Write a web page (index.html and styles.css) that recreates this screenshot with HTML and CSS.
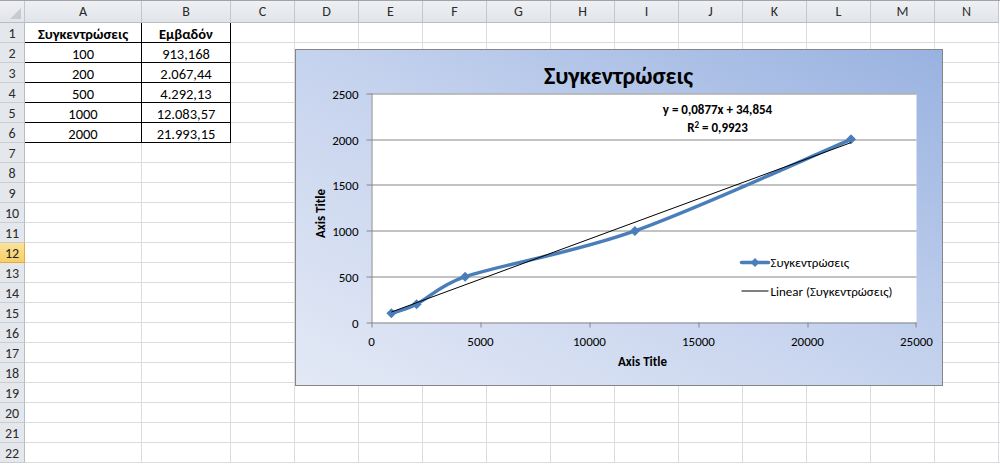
FILE: index.html
```html
<!DOCTYPE html>
<html lang="el">
<head>
<meta charset="utf-8">
<title>Συγκεντρώσεις</title>
<link rel="stylesheet" href="styles.css">
</head>
<body>
<div class="sheet">
  <div class="hdr">
    <div class="corner"></div>
    <div class="ch col-a">A</div>
    <div class="ch col-b">B</div>
    <div class="ch">C</div><div class="ch">D</div><div class="ch">E</div><div class="ch">F</div>
    <div class="ch">G</div><div class="ch">H</div><div class="ch">I</div><div class="ch">J</div>
    <div class="ch">K</div><div class="ch">L</div><div class="ch">M</div><div class="ch">N</div>
  </div>

  <div class="row"><div class="rh">1</div><div class="cell col-a tb bold">Συγκεντρώσεις</div><div class="cell col-b tb bold">Εμβαδόν</div><div class="rest"></div></div>
  <div class="row"><div class="rh">2</div><div class="cell col-a tb">100</div><div class="cell col-b tb">913,168</div><div class="rest"></div></div>
  <div class="row"><div class="rh">3</div><div class="cell col-a tb">200</div><div class="cell col-b tb">2.067,44</div><div class="rest"></div></div>
  <div class="row"><div class="rh">4</div><div class="cell col-a tb">500</div><div class="cell col-b tb">4.292,13</div><div class="rest"></div></div>
  <div class="row"><div class="rh">5</div><div class="cell col-a tb">1000</div><div class="cell col-b tb">12.083,57</div><div class="rest"></div></div>
  <div class="row"><div class="rh">6</div><div class="cell col-a tb">2000</div><div class="cell col-b tb">21.993,15</div><div class="rest"></div></div>
  <div class="row"><div class="rh">7</div><div class="cell col-a"></div><div class="cell col-b"></div><div class="rest"></div></div>
  <div class="row"><div class="rh">8</div><div class="cell col-a"></div><div class="cell col-b"></div><div class="rest"></div></div>
  <div class="row"><div class="rh">9</div><div class="cell col-a"></div><div class="cell col-b"></div><div class="rest"></div></div>
  <div class="row"><div class="rh">10</div><div class="cell col-a"></div><div class="cell col-b"></div><div class="rest"></div></div>
  <div class="row"><div class="rh">11</div><div class="cell col-a"></div><div class="cell col-b"></div><div class="rest"></div></div>
  <div class="row"><div class="rh sel">12</div><div class="cell col-a"></div><div class="cell col-b"></div><div class="rest"></div></div>
  <div class="row"><div class="rh">13</div><div class="cell col-a"></div><div class="cell col-b"></div><div class="rest"></div></div>
  <div class="row"><div class="rh">14</div><div class="cell col-a"></div><div class="cell col-b"></div><div class="rest"></div></div>
  <div class="row"><div class="rh">15</div><div class="cell col-a"></div><div class="cell col-b"></div><div class="rest"></div></div>
  <div class="row"><div class="rh">16</div><div class="cell col-a"></div><div class="cell col-b"></div><div class="rest"></div></div>
  <div class="row"><div class="rh">17</div><div class="cell col-a"></div><div class="cell col-b"></div><div class="rest"></div></div>
  <div class="row"><div class="rh">18</div><div class="cell col-a"></div><div class="cell col-b"></div><div class="rest"></div></div>
  <div class="row"><div class="rh">19</div><div class="cell col-a"></div><div class="cell col-b"></div><div class="rest"></div></div>
  <div class="row"><div class="rh">20</div><div class="cell col-a"></div><div class="cell col-b"></div><div class="rest"></div></div>
  <div class="row"><div class="rh">21</div><div class="cell col-a"></div><div class="cell col-b"></div><div class="rest"></div></div>
  <div class="row"><div class="rh">22</div><div class="cell col-a"></div><div class="cell col-b"></div><div class="rest"></div></div>

  <div class="chart">
    <svg class="chart-svg" width="648" height="337" viewBox="295.5 48.5 648 337">
      <text class="c-title" x="619" y="83" text-anchor="middle">Συγκεντρώσεις</text>
      <rect class="plot" x="372" y="93" width="545" height="229"/>
      <g class="grid">
        <line x1="367" y1="93.5" x2="917" y2="93.5"/>
        <line x1="367" y1="139.5" x2="917" y2="139.5"/>
        <line x1="367" y1="184.5" x2="917" y2="184.5"/>
        <line x1="367" y1="230.5" x2="917" y2="230.5"/>
        <line x1="367" y1="276.5" x2="917" y2="276.5"/>
        <line x1="367" y1="322.5" x2="917" y2="322.5"/>
        <line x1="372.5" y1="93" x2="372.5" y2="327"/>
        <line x1="481.5" y1="322" x2="481.5" y2="327"/>
        <line x1="590.5" y1="322" x2="590.5" y2="327"/>
        <line x1="699.5" y1="322" x2="699.5" y2="327"/>
        <line x1="808.5" y1="322" x2="808.5" y2="327"/>
        <line x1="916.5" y1="322" x2="916.5" y2="327"/>
      </g>
      <g class="ylab" text-anchor="end">
        <text x="359" y="98">2500</text>
        <text x="359" y="144">2000</text>
        <text x="359" y="189">1500</text>
        <text x="359" y="235">1000</text>
        <text x="359" y="281">500</text>
        <text x="359" y="327">0</text>
      </g>
      <g class="xlab" text-anchor="middle">
        <text x="372" y="345">0</text>
        <text x="481" y="345">5000</text>
        <text x="590" y="345">10000</text>
        <text x="699" y="345">15000</text>
        <text x="808" y="345">20000</text>
        <text x="917" y="345">25000</text>
      </g>
      <text class="axt" x="643" y="365" text-anchor="middle">Axis Title</text>
      <text class="axt" transform="translate(325 213) rotate(-90)" text-anchor="middle">Axis Title</text>

      <path class="series" d="M391.9,312.84 C396.1,311.31 405.5,309.5 417.07,303.68 C429.35,297.57 440,285 465.57,276.2 C501.96,263.99 571.11,253.3 635.42,230.4 C699.73,207.5 815.44,154.07 851.45,138.8"/>
      <g class="marker">
        <polygon points="391.9,307.8 396.9,312.8 391.9,317.8 386.9,312.8"/>
        <polygon points="417.1,298.7 422.1,303.7 417.1,308.7 412.1,303.7"/>
        <polygon points="465.6,271.2 470.6,276.2 465.6,281.2 460.6,276.2"/>
        <polygon points="635.4,225.4 640.4,230.4 635.4,235.4 630.4,230.4"/>
        <polygon points="851.5,133.8 856.5,138.8 851.5,143.8 846.5,138.8"/>
      </g>
      <line class="trend" x1="391.9" y1="311.5" x2="851.5" y2="142.1"/>

      <text class="eq" x="718" y="113" text-anchor="middle">y = 0,0877x + 34,854</text>
      <text class="eq" x="718" y="131" text-anchor="middle">R<tspan class="sup" dy="-4">2</tspan><tspan dy="4"> = 0,9923</tspan></text>

      <line class="series" x1="742" y1="262" x2="769" y2="262"/>
      <polygon class="marker" points="755.5,257.5 760,262 755.5,266.5 751,262"/>
      <text class="leg" x="771" y="266.5">Συγκεντρώσεις</text>
      <line class="trend" x1="742" y1="290.5" x2="769" y2="290.5"/>
      <text class="leg" x="771" y="295.5">Linear (Συγκεντρώσεις)</text>
    </svg>
  </div>
</div>
</body>
</html>
```
FILE: styles.css
```css
html, body {
  margin: 0;
  padding: 0;
  background: #ffffff;
}

body {
  font-family: "Carlito", "Lato", "Open Sans", "DejaVu Sans", sans-serif;
  font-size: 14.5px;
  color: #000;
  width: 1000px;
  height: 465px;
  overflow: hidden;
}

.sheet {
  position: relative;
  display: flex;
  flex-direction: column;
  width: 1000px;
  border-top: 1px solid #a0a3a8;
}

.hdr {
  display: flex;
  height: 22px;
}

.corner {
  position: relative;
  box-sizing: border-box;
  width: 25px;
  height: 22px;
  background: linear-gradient(#eef0f3, #e1e4e9);
  border-right: 1px solid #c3c6cc;
  border-bottom: 1px solid #b8bcc3;
}

.corner::after {
  content: "";
  position: absolute;
  right: 3px;
  bottom: 3px;
  width: 11px;
  height: 11px;
  background: #c7cacf;
  clip-path: polygon(100% 0, 100% 100%, 0 100%);
}

.ch {
  box-sizing: border-box;
  width: 64px;
  height: 22px;
  display: flex;
  align-items: center;
  justify-content: center;
  background: linear-gradient(#eef0f3, #e1e4e9);
  border-right: 1px solid #c3c6cc;
  border-bottom: 1px solid #b8bcc3;
  color: #2b2b2b;
  font-size: 14px;
}

.col-a { width: 117px; }
.col-b { width: 89px; }

.row {
  display: flex;
  height: 20px;
}

.rh {
  box-sizing: border-box;
  width: 25px;
  flex: none;
  display: flex;
  align-items: center;
  justify-content: center;
  background: #e4e7ec;
  border-right: 1px solid #b8bcc3;
  border-bottom: 1px solid #c9ccd1;
  color: #2b2b2b;
  font-size: 14px;
  padding-top: 1px;
}

.rh.sel {
  background: linear-gradient(#fbe39a, #f7cf66);
  border-right: 1px solid #e7a83c;
  border-bottom: 1px solid #e7a83c;
  color: #222;
}

.cell {
  box-sizing: border-box;
  flex: none;
  height: 20px;
  display: flex;
  align-items: center;
  justify-content: center;
  border-right: 1px solid #dadcdd;
  border-bottom: 1px solid #dadcdd;
  padding-top: 2px;
  white-space: nowrap;
}

.cell.tb {
  border-right-color: #000;
  border-bottom-color: #000;
}

.bold { font-weight: bold; }

.rest {
  flex: 1;
  box-sizing: border-box;
  height: 20px;
  border-bottom: 1px solid #dadcdd;
  background: repeating-linear-gradient(to right, transparent 0 63px, #dadcdd 63px 64px);
}

.chart {
  position: absolute;
  left: 295px;
  top: 48px;
  width: 648px;
  height: 337px;
  box-sizing: border-box;
  border: 1px solid #868686;
  background: linear-gradient(to top right, #e3e9f5 0%, #c6d3ee 50%, #98b2e0 100%);
  overflow: hidden;
}

.chart-svg {
  display: block;
  position: absolute;
  left: -1px;
  top: -1px;
  font-family: "Carlito", "Lato", "Open Sans", "DejaVu Sans", sans-serif;
}

.c-title {
  font-size: 24px;
  font-weight: bold;
  fill: #000;
}

.plot { fill: #ffffff; }

.grid line {
  stroke: #868686;
  stroke-width: 1;
}

.ylab text, .xlab text {
  font-size: 13px;
  fill: #000;
}

.axt {
  font-size: 13px;
  font-weight: bold;
  fill: #000;
}

.eq {
  font-size: 13px;
  font-weight: bold;
  fill: #000;
}

.sup { font-size: 9px; }

.leg {
  font-size: 13px;
  fill: #000;
}

.series {
  fill: none;
  stroke: #4a7ebb;
  stroke-width: 3.5;
  stroke-linecap: round;
  stroke-linejoin: round;
}

.marker, .marker polygon { fill: #4a7ebb; }

.trend {
  stroke: #000;
  stroke-width: 1;
  fill: none;
}
```
